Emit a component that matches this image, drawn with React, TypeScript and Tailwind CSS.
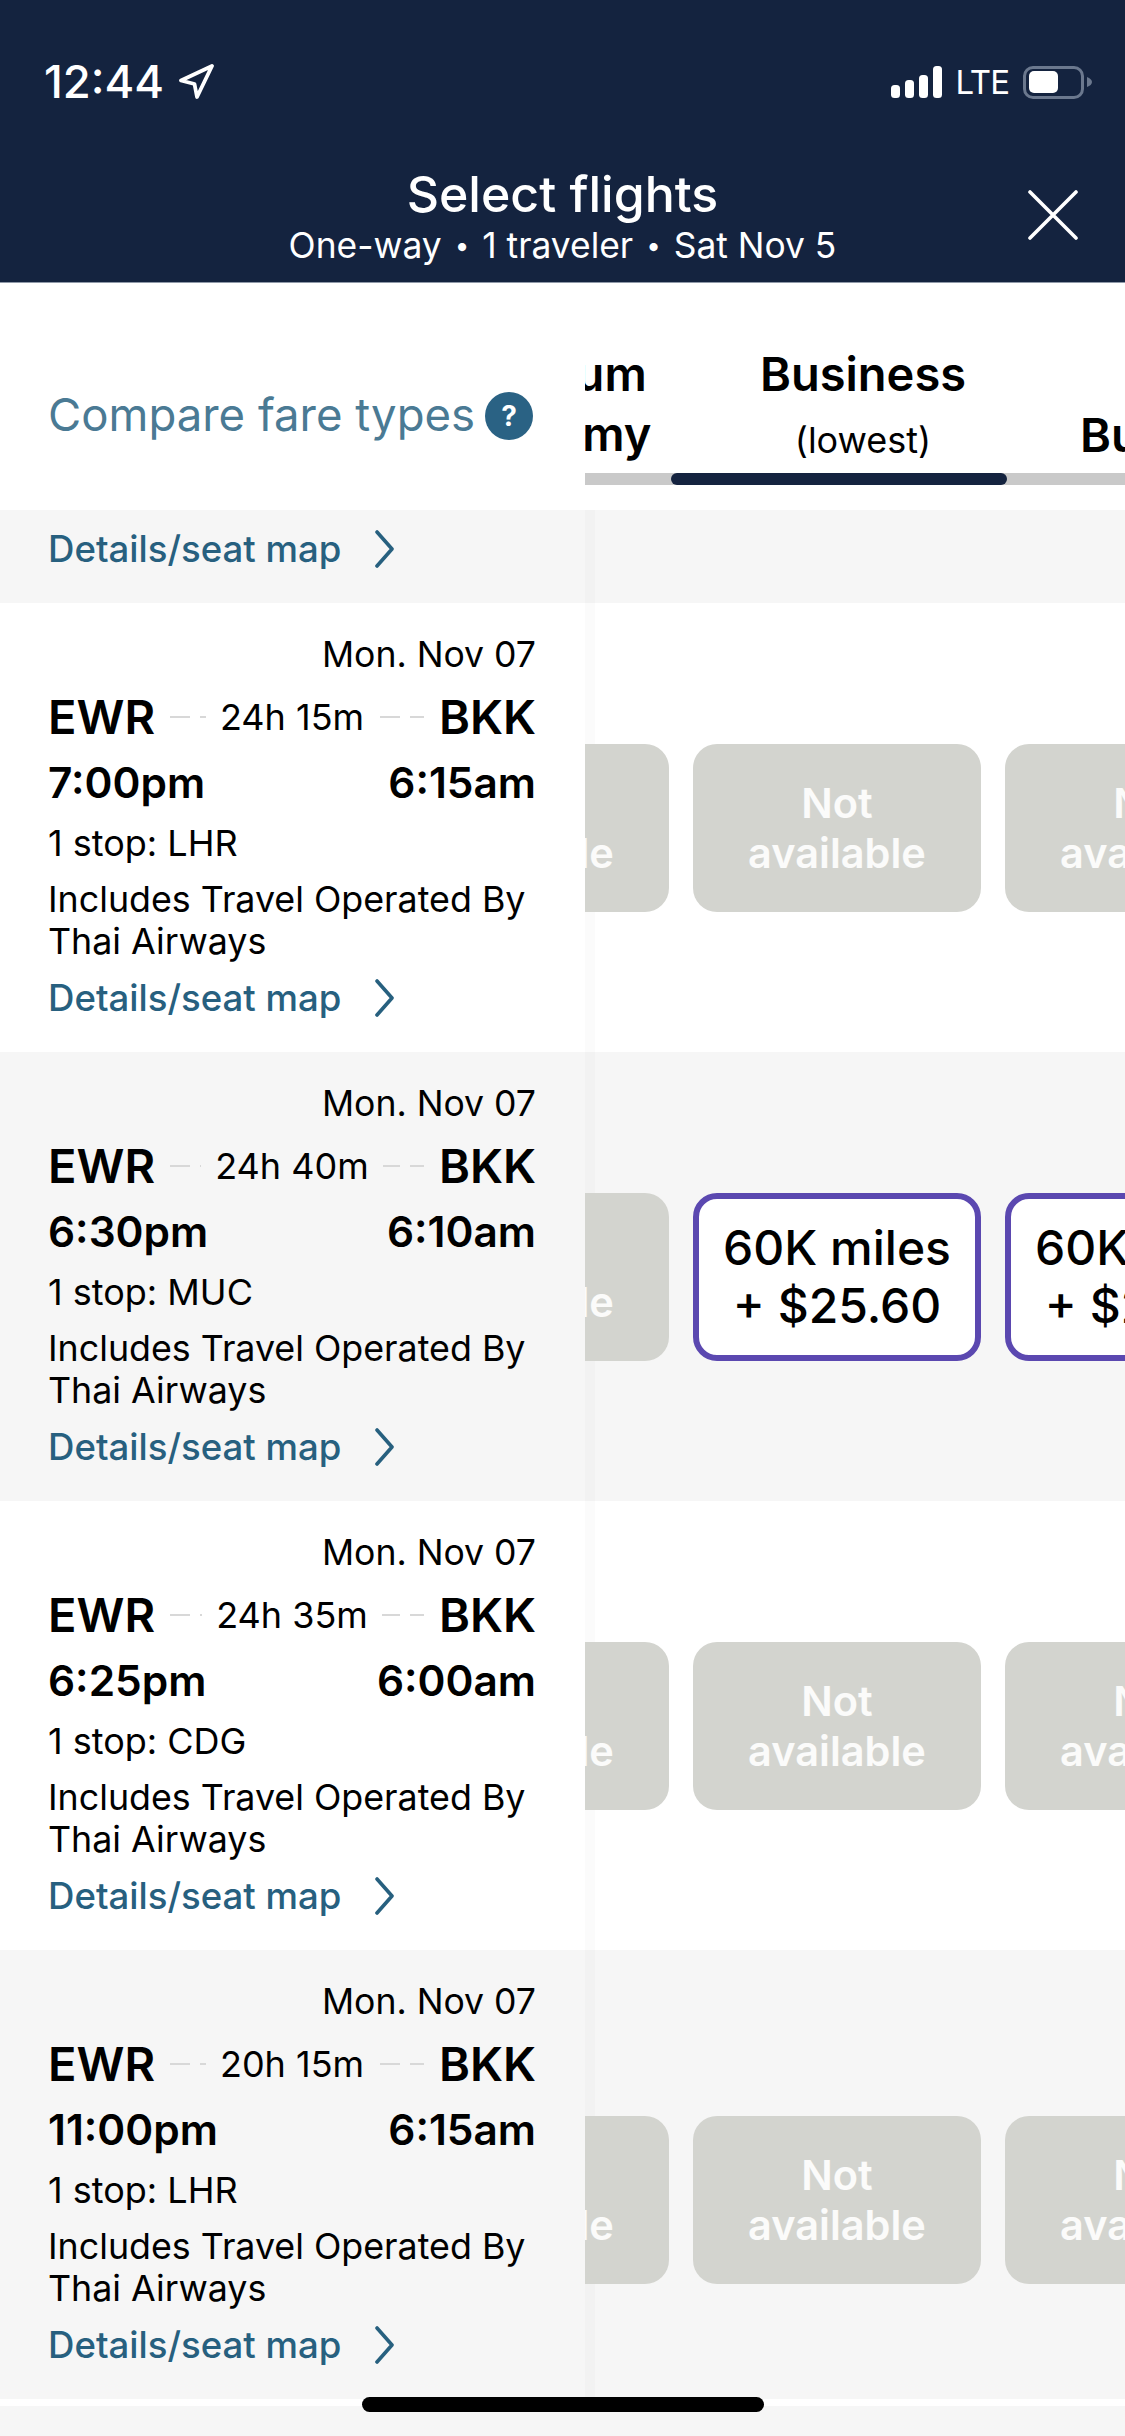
/**
 * Select flights screen
 * Sticky fare header with scrolled fare columns
 */

type Flight = {
  duration: string
  depart: string
  arrive: string
  stop: string
  fares: 'none' | 'miles'
  low?: boolean
}

const flights: Flight[] = [
  { duration: '24h 15m', depart: '7:00pm', arrive: '6:15am', stop: '1 stop: LHR', fares: 'none' },
  { duration: '24h 40m', depart: '6:30pm', arrive: '6:10am', stop: '1 stop: MUC', fares: 'miles' },
  { duration: '24h 35m', depart: '6:25pm', arrive: '6:00am', stop: '1 stop: CDG', fares: 'none' },
  { duration: '20h 15m', depart: '11:00pm', arrive: '6:15am', stop: '1 stop: LHR', fares: 'none', low: true },
]

function Chevron() {
  return (
    <svg width="20" height="38" viewBox="0 0 20 38" fill="none" className="shrink-0">
      <path d="M2 2l15 17L2 36" stroke="#27607f" strokeWidth="3.6" strokeLinecap="round" strokeLinejoin="round" />
    </svg>
  )
}

function DetailsLink() {
  return (
    <div className="flex items-center h-[46px] gap-[34px] text-[36.6px] font-medium text-[#27607f]">
      <span>Details/seat map</span>
      <Chevron />
    </div>
  )
}

function Bullet() {
  return <span className="relative -top-[3px] mx-[3px] text-[26px]">•</span>
}

function NotAvailable() {
  return (
    <div className="w-[288px] h-[168px] shrink-0 rounded-[24px] bg-[#d3d4cf] flex items-center justify-center text-center text-[41.5px] leading-[50px] font-semibold text-white/90">
      <span>
        Not
        <br />
        available
      </span>
    </div>
  )
}

function MilesFare() {
  return (
    <div className="w-[288px] h-[168px] shrink-0 rounded-[24px] bg-white border-[6px] border-[#5b48b0] flex items-center justify-center text-center text-[48px] leading-[58px] font-medium text-black whitespace-nowrap">
      <span>
        60K miles
        <br />+ $25.60
      </span>
    </div>
  )
}

function FlightRow({ flight, shaded }: { flight: Flight; shaded: boolean }) {
  return (
    <div className={`flex h-[449px] ${shaded ? 'bg-[#f6f6f6]' : 'bg-white'}`}>
      {/* Flight info */}
      <div className="w-[585px] shrink-0 pl-[48px] pr-[49px] pt-[26px] text-black">
        <div className="h-[52px] leading-[52px] text-[35.6px] text-right">Mon. Nov 07</div>
        <div className="flex items-center h-[72px] text-[47px] font-semibold">
          <span>EWR</span>
          <div className="relative flex-1 mx-[15px] flex items-center justify-center pr-[10px]">
            <div className="absolute inset-x-0 h-[2px] bg-[repeating-linear-gradient(90deg,#d8d8d8_0_20px,transparent_20px_30px)]" />
            <span className={`relative px-[14px] text-[36px] font-normal whitespace-nowrap ${shaded ? 'bg-[#f6f6f6]' : 'bg-white'}`}>
              {flight.duration}
            </span>
          </div>
          <span>BKK</span>
        </div>
        <div className="flex justify-between items-center h-[60px] text-[42.4px] font-semibold">
          <span>{flight.depart}</span>
          <span>{flight.arrive}</span>
        </div>
        <div className="h-[60px] leading-[60px] text-[36px]">{flight.stop}</div>
        <div className="mt-[5px] text-[35.8px] leading-[42px]">
          Includes Travel Operated By
          <br />
          Thai Airways
        </div>
        <div className="mt-[13px]">
          <DetailsLink />
        </div>
      </div>

      {/* Fare columns */}
      <div className="relative flex-1 min-w-0 overflow-hidden">
        <div className="absolute inset-y-0 left-0 w-[10px] bg-black/[0.015]" />
        <div className={`relative flex gap-6 -ml-[204px] ${flight.low ? 'pt-[166px]' : 'pt-[141px]'}`}>
          {flight.fares === 'miles' ? (
            <>
              <NotAvailable />
              <MilesFare />
              <MilesFare />
            </>
          ) : (
            <>
              <NotAvailable />
              <NotAvailable />
              <NotAvailable />
            </>
          )}
        </div>
      </div>
    </div>
  )
}

function StatusBar() {
  return (
    <div className="flex items-center justify-between h-[162px] pl-[44px] pr-[33px] pt-[2px] text-white">
      <div className="flex items-center gap-[14px]">
        <span className="text-[45.4px] font-medium leading-none">12:44</span>
        <svg width="36" height="36" viewBox="0 0 36 36" fill="none">
          <path d="M34 2L3 16.5l13.5 3.5L19 33z" stroke="white" strokeWidth="3.8" strokeLinejoin="round" />
        </svg>
      </div>
      <div className="flex items-center">
        <svg width="51" height="32" viewBox="0 0 51 32" fill="white">
          <rect x="0" y="19" width="9" height="13" rx="3.5" />
          <rect x="14" y="14" width="9" height="18" rx="3.5" />
          <rect x="28" y="9" width="9" height="23" rx="3.5" />
          <rect x="42" y="0" width="9" height="32" rx="3.5" />
        </svg>
        <span className="ml-[13px] text-[33px] leading-none tracking-[-1px]">LTE</span>
        <div className="ml-[14px] flex items-center">
          <div className="w-[61px] h-[33px] rounded-[10px] border-[3px] border-[#6b788e] p-[2.5px]">
            <div className="w-[29px] h-full rounded-[5px] bg-white" />
          </div>
          <svg width="5" height="10" viewBox="0 0 5 10" fill="#6b788e" className="ml-[3px]">
            <path d="M0 0c3 1 5 3 5 5s-2 4-5 5z" />
          </svg>
        </div>
      </div>
    </div>
  )
}

function Header() {
  return (
    <div className="relative h-[283px] bg-[#14233f] border-b border-[#8f99a8]">
      <StatusBar />
      <div className="text-center text-white pt-[2px]">
        <div className="text-[50px] leading-[60px] font-medium">Select flights</div>
        <div className="text-[35.4px] leading-[44px]">
          One-way <Bullet /> 1 traveler <Bullet /> Sat Nov 5
        </div>
      </div>
      <svg
        width="50"
        height="50"
        viewBox="0 0 50 50"
        fill="none"
        className="absolute left-[1028px] top-[190px]"
      >
        <path d="M2 2l46 46M48 2L2 48" stroke="white" strokeWidth="3.6" strokeLinecap="round" />
      </svg>
    </div>
  )
}

function FareHeader() {
  return (
    <div className="flex h-[227px] bg-white">
      <div className="w-[585px] shrink-0 flex items-center pl-[48px] pt-[38px]">
        <span className="text-[45.5px] text-[#4a7a94] whitespace-nowrap">Compare fare types</span>
        <span className="ml-[10px] w-[48px] h-[48px] shrink-0 rounded-full bg-[#2a6284] flex items-center justify-center text-[28px] font-bold text-white">
          ?
        </span>
      </div>
      <div className="flex-1 min-w-0 overflow-hidden">
        <div className="flex h-[190px] pt-[61px] text-[47px] font-semibold leading-[60px] text-black whitespace-nowrap">
          <div className="w-[300px] shrink-0 -ml-[189px] text-center">
            Premium
            <br />
            Economy
          </div>
          <div className="w-[210px] shrink-0 ml-[62px] text-center">
            <div>Business</div>
            <div className="text-[36px] font-normal pt-[6px]">(lowest)</div>
          </div>
          <div className="ml-[112px] pt-[61px]">Business</div>
        </div>
        {/* Scroll indicator */}
        <div className="h-[12px] bg-[#c9c9c9] pl-[86px]">
          <div className="w-[336px] h-full rounded-full bg-[#14233f]" />
        </div>
      </div>
    </div>
  )
}

export default function App() {
  return (
    <div className="relative w-[1125px] h-[2436px] overflow-hidden bg-[#f6f6f6] font-['Inter',sans-serif]">
      <Header />
      <FareHeader />

      {/* Row scrolled under the sticky header */}
      <div className="flex h-[93px] bg-[#f6f6f6]">
        <div className="w-[585px] shrink-0 flex flex-col justify-end pl-[48px] pb-[31px] overflow-hidden">
          <div className="shrink-0 text-[35.8px] leading-[42px] mb-[16px] whitespace-nowrap">Thai Airways</div>
          <DetailsLink />
        </div>
        <div className="flex-1 relative">
          <div className="absolute inset-y-0 left-0 w-[10px] bg-black/[0.015]" />
        </div>
      </div>

      {flights.map((flight, i) => (
        <FlightRow key={flight.depart} flight={flight} shaded={i % 2 === 1} />
      ))}

      <div className="h-[7px] bg-white" />

      {/* Home indicator */}
      <div className="absolute left-[362px] top-[2397px] w-[402px] h-[15px] rounded-full bg-black" />
    </div>
  )
}
